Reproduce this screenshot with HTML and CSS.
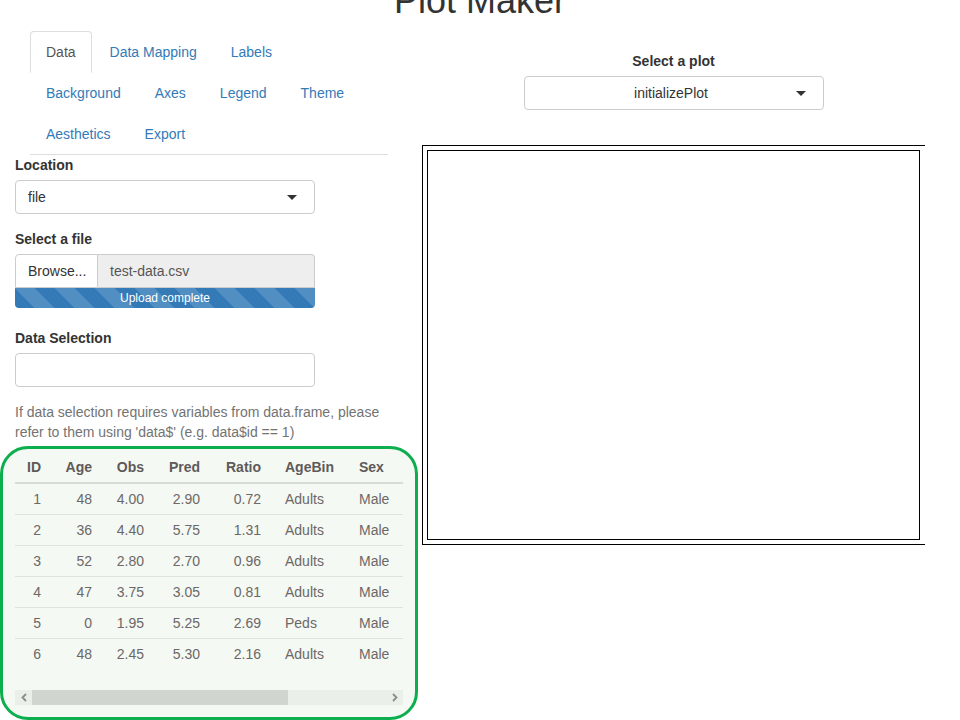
FILE: index.html
```html
<!DOCTYPE html>
<html lang="en">
<head>
<meta charset="utf-8">
<title>Plot Maker</title>
<link rel="stylesheet" href="styles.css">
</head>
<body>
<h1 class="title">Plot Maker</h1>
<div class="main">
  <div class="left">
    <ul class="tabs">
      <li class="tab active"><a>Data</a></li>
      <li class="tab"><a>Data Mapping</a></li>
      <li class="tab"><a>Labels</a></li>
      <li class="tab"><a>Background</a></li>
      <li class="tab"><a>Axes</a></li>
      <li class="tab"><a>Legend</a></li>
      <li class="tab"><a>Theme</a></li>
      <li class="tab"><a>Aesthetics</a></li>
      <li class="tab"><a>Export</a></li>
    </ul>
    <div class="form">
      <div class="group">
        <label class="lbl">Location</label>
        <div class="select"><span>file</span><span class="caret"></span></div>
      </div>
      <div class="group group-file">
        <label class="lbl">Select a file</label>
        <div class="file-input">
          <span class="browse">Browse...</span>
          <span class="file-name">test-data.csv</span>
        </div>
        <div class="progress">Upload complete</div>
      </div>
      <div class="group">
        <label class="lbl">Data Selection</label>
        <div class="text-input"></div>
      </div>
      <p class="help">If data selection requires variables from data.frame, please refer to them using 'data$' (e.g. data$id == 1)</p>
    </div>
    <div class="tablebox">
      <div class="viewport">
        <table class="data">
          <colgroup>
            <col class="c1"><col class="c2"><col class="c3"><col class="c4"><col class="c5"><col class="c6"><col class="c7">
          </colgroup>
          <thead>
            <tr><th class="num">ID</th><th class="num">Age</th><th class="num">Obs</th><th class="num">Pred</th><th class="num">Ratio</th><th>AgeBin</th><th>Sex</th></tr>
          </thead>
          <tbody>
            <tr><td class="num">1</td><td class="num">48</td><td class="num">4.00</td><td class="num">2.90</td><td class="num">0.72</td><td>Adults</td><td>Male</td></tr>
            <tr><td class="num">2</td><td class="num">36</td><td class="num">4.40</td><td class="num">5.75</td><td class="num">1.31</td><td>Adults</td><td>Male</td></tr>
            <tr><td class="num">3</td><td class="num">52</td><td class="num">2.80</td><td class="num">2.70</td><td class="num">0.96</td><td>Adults</td><td>Male</td></tr>
            <tr><td class="num">4</td><td class="num">47</td><td class="num">3.75</td><td class="num">3.05</td><td class="num">0.81</td><td>Adults</td><td>Male</td></tr>
            <tr><td class="num">5</td><td class="num">0</td><td class="num">1.95</td><td class="num">5.25</td><td class="num">2.69</td><td>Peds</td><td>Male</td></tr>
            <tr><td class="num">6</td><td class="num">48</td><td class="num">2.45</td><td class="num">5.30</td><td class="num">2.16</td><td>Adults</td><td>Male</td></tr>
          </tbody>
        </table>
      </div>
      <div class="hscroll">
        <span class="arrow"><svg width="6" height="9" viewBox="0 0 6 9"><path d="M5 1 L1.5 4.5 L5 8" fill="none" stroke="#8a8d89" stroke-width="1.8"/></svg></span>
        <span class="thumb"></span>
        <span class="track-rest"></span>
        <span class="arrow"><svg width="6" height="9" viewBox="0 0 6 9"><path d="M1 1 L4.5 4.5 L1 8" fill="none" stroke="#8a8d89" stroke-width="1.8"/></svg></span>
      </div>
    </div>
  </div>
  <div class="right">
    <label class="lbl lbl-center">Select a plot</label>
    <div class="select select-center"><span></span><span>initializePlot</span><span class="caret"></span></div>
    <div class="plot-outer">
      <div class="plot-inner"></div>
    </div>
  </div>
</div>
</body>
</html>
```
FILE: styles.css
```css
* { box-sizing: border-box; }
html, body {
  margin: 0;
  padding: 0;
  background: #fff;
}
body {
  font-family: "Liberation Sans", Arial, sans-serif;
  font-size: 14px;
  line-height: 20px;
  color: #333;
  overflow: hidden;
}
.title {
  margin: -19px 0 10px;
  font-size: 36px;
  line-height: 40px;
  font-weight: normal;
  text-align: center;
  color: #333;
}
.main {
  display: flex;
  gap: 4px;
  align-items: flex-start;
}
.left {
  width: 418px;
  flex: none;
}
.tabs {
  list-style: none;
  margin: 0 0 0 30px;
  padding: 0;
  width: 358px;
  display: flex;
  flex-wrap: wrap;
  border-bottom: 1px solid #ddd;
}
.tab {
  margin: 0 2px -1px 0;
}
.tab a {
  display: block;
  padding: 10px 15px;
  line-height: 20px;
  border: 1px solid transparent;
  border-radius: 4px 4px 0 0;
  color: #337ab7;
}
.tab.active a {
  color: #555;
  background: #fff;
  border-color: #ddd #ddd transparent;
}
.form {
  padding-left: 15px;
  width: 315px;
}
.lbl {
  display: block;
  font-weight: bold;
  margin-bottom: 5px;
}
.group {
  margin-bottom: 15px;
}
.group-file {
  margin-bottom: 20px;
}
.select {
  width: 300px;
  height: 34px;
  border: 1px solid #ccc;
  border-radius: 4px;
  padding: 0 17px 0 12px;
  display: flex;
  align-items: center;
  justify-content: space-between;
  background: #fff;
}
.caret {
  width: 0;
  height: 0;
  border-left: 5px solid transparent;
  border-right: 5px solid transparent;
  border-top: 5px solid #333;
}
.file-input {
  display: flex;
  height: 34px;
  width: 300px;
}
.browse {
  width: 83px;
  border: 1px solid #ccc;
  border-radius: 4px 0 0 0;
  background: #fff;
  padding: 6px 12px;
  color: #333;
}
.file-name {
  flex: 1;
  border: 1px solid #ccc;
  border-left: 0;
  border-radius: 0 4px 0 0;
  background: #eee;
  padding: 6px 12px;
  color: #555;
}
.progress {
  width: 300px;
  height: 20px;
  border-radius: 0 0 4px 4px;
  background-color: #337ab7;
  background-image: linear-gradient(45deg, rgba(255,255,255,.15) 25%, transparent 25%, transparent 50%, rgba(255,255,255,.15) 50%, rgba(255,255,255,.15) 75%, transparent 75%, transparent);
  background-size: 40px 40px;
  color: #fff;
  font-size: 12px;
  line-height: 20px;
  text-align: center;
}
.text-input {
  width: 300px;
  height: 34px;
  border: 1px solid #ccc;
  border-radius: 4px;
  background: #fff;
}
.help {
  margin: 0;
  color: #737373;
  width: 380px;
}
.tablebox {
  margin-top: 4px;
  width: 418px;
  height: 274px;
  border: 3px solid #0cae4d;
  border-radius: 28px;
  background: #f4f9f3;
  padding: 3px 12px 0;
}
.viewport {
  width: 388px;
  overflow: hidden;
}
.data {
  border-collapse: separate;
  border-spacing: 0;
  table-layout: fixed;
  width: 537px;
}
.c1 { width: 38px; }
.c2 { width: 51px; }
.c3 { width: 52px; }
.c4 { width: 56px; }
.c5 { width: 61px; }
.c6 { width: 74px; }
.c7 { width: 205px; }
.data th, .data td {
  padding: 5px 12px;
  line-height: 20px;
  text-align: left;
  white-space: nowrap;
}
.data th {
  font-weight: bold;
  color: #5f5a5a;
  border-bottom: 2px solid #d8dcd6;
}
.data td {
  color: #6d6767;
  border-top: 1px solid #dfe3dd;
}
.data tbody tr:first-child td {
  border-top: 0;
}
.data .num {
  text-align: right;
}
.hscroll {
  margin-top: 21px;
  width: 388px;
  height: 15px;
  background: #eaefe9;
  display: flex;
}
.arrow {
  width: 17px;
  display: flex;
  align-items: center;
  justify-content: center;
}
.thumb {
  width: 256px;
  background: #d1d5cf;
}
.track-rest {
  flex: 1;
}
.right {
  width: 503px;
  flex: none;
  padding-top: 20px;
}
.lbl-center {
  text-align: center;
}
.select-center {
  margin: 0 auto;
  display: grid;
  grid-template-columns: 1fr auto 1fr;
  align-items: center;
  padding: 0 17px 0 12px;
}
.select-center .caret {
  justify-self: end;
}
.plot-outer {
  margin-top: 35px;
  width: 503px;
  height: 400px;
  border-top: 1px solid #000;
  border-left: 1px solid #000;
  border-bottom: 1px solid #000;
  padding: 4px;
}
.plot-inner {
  width: 493px;
  height: 390px;
  border: 1px solid #000;
}
```
